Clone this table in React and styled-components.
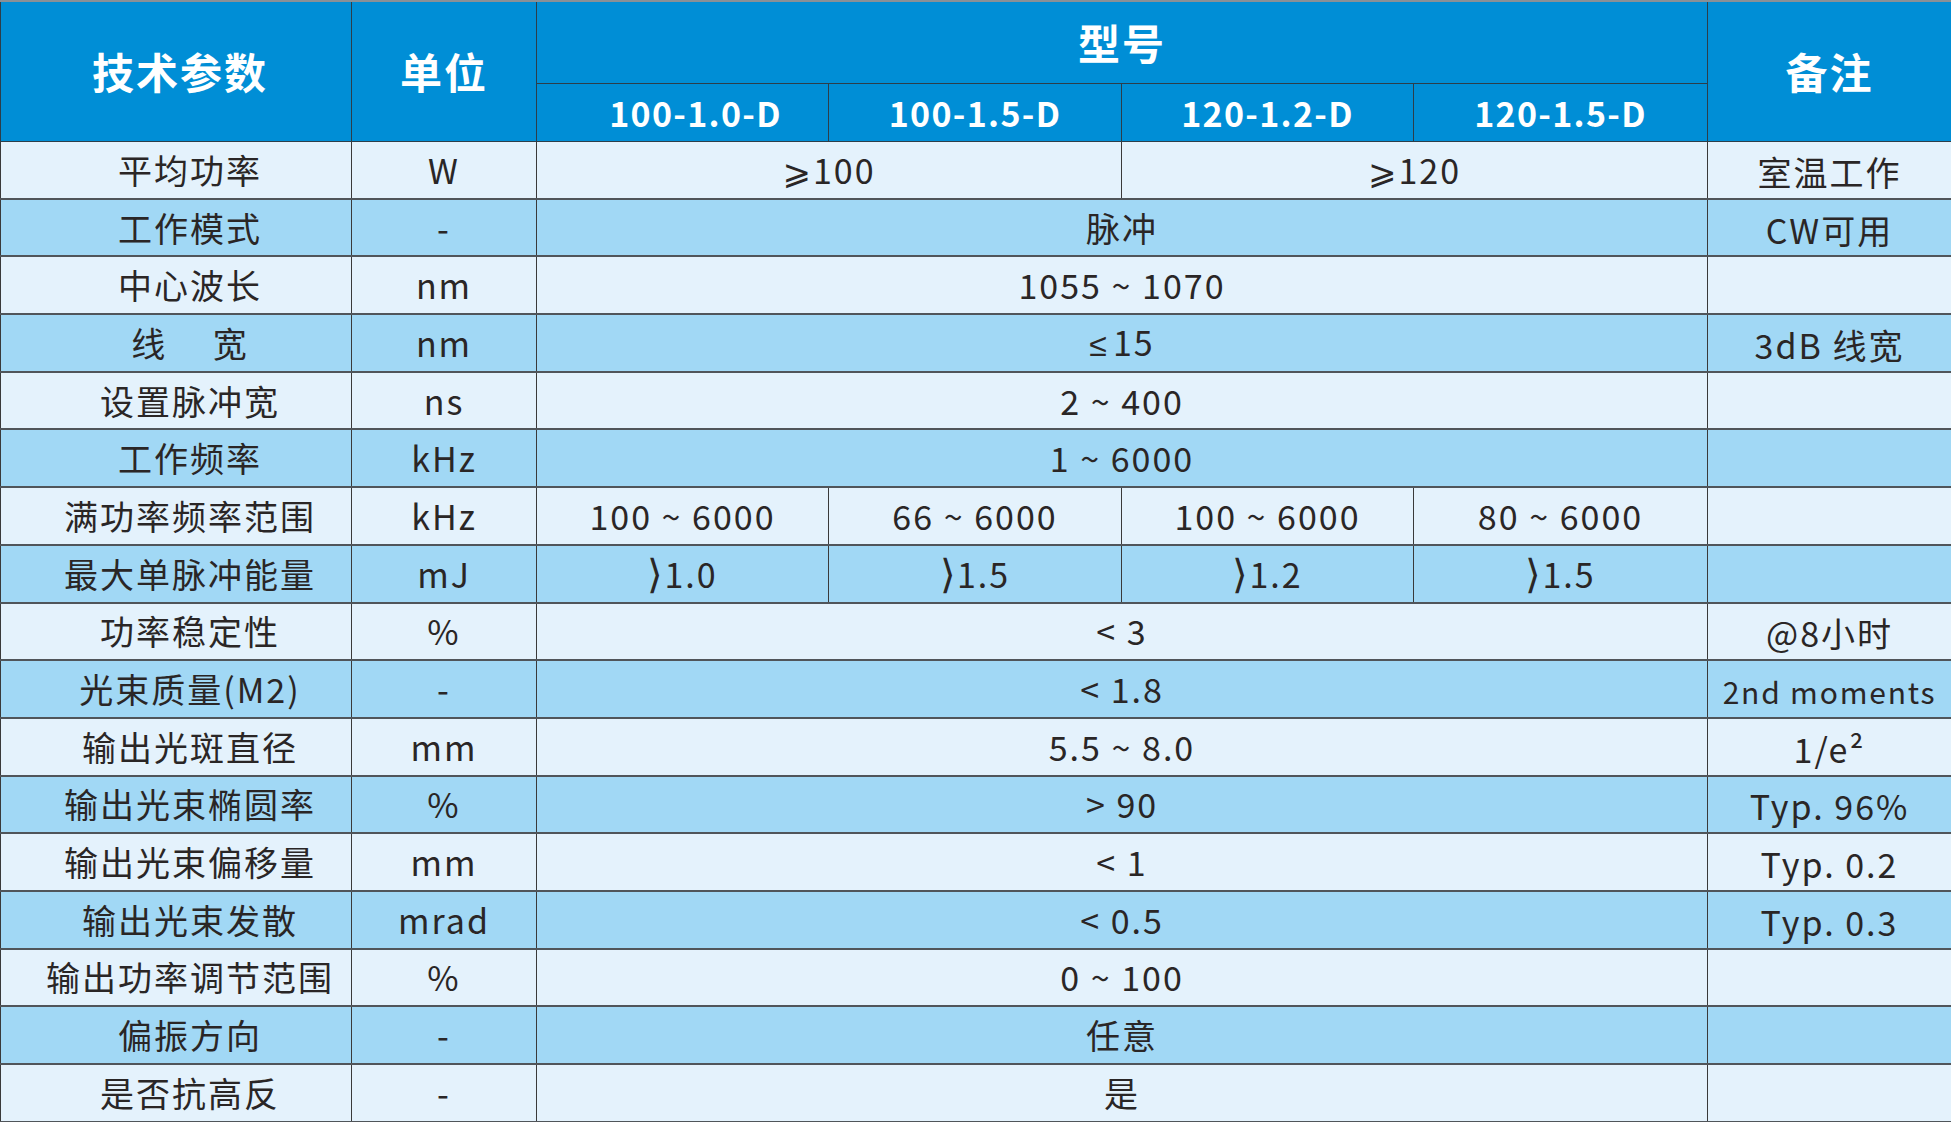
import React from 'react'
import styled, { createGlobalStyle } from 'styled-components'

const GlobalStyle = createGlobalStyle`
  html, body {
    margin: 0;
    padding: 0;
    background: #ffffff;
  }
  body {
    font-family: "Noto Sans CJK SC", "Noto Sans", "DejaVu Sans", sans-serif;
  }
`

const widths = [351, 185, 292, 293, 292, 294, 244]

const Chevron = styled.span`
  font-family: "DejaVu Sans ExtraLight", "DejaVu Sans", sans-serif;
  font-size: 40px;
  font-weight: 200;
  letter-spacing: 0;
  line-height: 0;
  margin-right: 1px;
`

const LatinSym = styled.span`
  font-family: "Liberation Sans", "DejaVu Sans", sans-serif;
  font-size: 32px;
  margin-right: 4px;
`

const gt = v => (
  <>
    <Chevron>⟩</Chevron>
    {v}
  </>
)

const rows = [
  ['平均功率', 'W', [['⩾100', 2], ['⩾120', 2]], '室温工作'],
  ['工作模式', '-', [['脉冲', 4]], 'CW可用'],
  ['中心波长', 'nm', [['1055 ~ 1070', 4]], ''],
  ['线　 宽', 'nm', [[<><LatinSym>≤</LatinSym>15</>, 4]], '3dB 线宽'],
  ['设置脉冲宽', 'ns', [['2 ~ 400', 4]], ''],
  ['工作频率', 'kHz', [['1 ~ 6000', 4]], ''],
  ['满功率频率范围', 'kHz', [['100 ~ 6000', 1], ['66 ~ 6000', 1], ['100 ~ 6000', 1], ['80 ~ 6000', 1]], ''],
  ['最大单脉冲能量', 'mJ', [[gt('1.0'), 1], [gt('1.5'), 1], [gt('1.2'), 1], [gt('1.5'), 1]], ''],
  ['功率稳定性', '%', [['< 3', 4]], '@8小时'],
  ['光束质量(M2)', '-', [['< 1.8', 4]], '2nd moments'],
  ['输出光斑直径', 'mm', [['5.5 ~ 8.0', 4]], '1/e²'],
  ['输出光束椭圆率', '%', [['> 90', 4]], 'Typ. 96%'],
  ['输出光束偏移量', 'mm', [['< 1', 4]], 'Typ. 0.2'],
  ['输出光束发散', 'mrad', [['< 0.5', 4]], 'Typ. 0.3'],
  ['输出功率调节范围', '%', [['0 ~ 100', 4]], ''],
  ['偏振方向', '-', [['任意', 4]], ''],
  ['是否抗高反', '-', [['是', 4]], ''],
]

const models = ['100-1.0-D', '100-1.5-D', '120-1.2-D', '120-1.5-D']

export default function App() {
  return (
    <>
      <GlobalStyle />
      <Sheet>
        <colgroup>
          {widths.map((w, i) => (
            <Col key={i} $w={w} />
          ))}
        </colgroup>
        <thead>
          <TopRow>
            <HeadCell rowSpan={2} $first>技术参数</HeadCell>
            <HeadCell rowSpan={2}>单位</HeadCell>
            <HeadCell colSpan={4}>型号</HeadCell>
            <HeadCell rowSpan={2}>备注</HeadCell>
          </TopRow>
          <SubRow>
            {models.map((m, i) => (
              <ModelCell key={m} $first={i === 0}>{m}</ModelCell>
            ))}
          </SubRow>
        </thead>
        <tbody>
          {rows.map(([name, unit, values, note], i) => (
            <DataRow key={name} $dark={i % 2 === 1}>
              <NameCell>{name}</NameCell>
              <Cell>{unit}</Cell>
              {values.map(([v, span], j) => (
                <Cell key={j} colSpan={span}>{v}</Cell>
              ))}
              <NoteCell $small={note.length > 10}>{note}</NoteCell>
            </DataRow>
          ))}
        </tbody>
      </Sheet>
    </>
  )
}

const Sheet = styled.table`
  width: 1951px;
  table-layout: fixed;
  border-collapse: collapse;
  border-top: 2px solid #8a9096;
  color: #2a2626;
`

const Col = styled.col`
  width: ${p => p.$w}px;
`

const TopRow = styled.tr`
  height: 82px;
  background: #008ed6;
`

const SubRow = styled.tr`
  height: 58px;
  background: #008ed6;
`

const HeadCell = styled.th`
  padding: 0 0 0 ${p => (p.$first ? '8px' : '0')};
  border: 1px solid #2c3e4a;
  color: #ffffff;
  font-size: 42px;
  font-weight: 700;
  letter-spacing: 2px;
  text-align: center;
  vertical-align: middle;
  line-height: 1;
`

const ModelCell = styled(HeadCell)`
  font-size: 34px;
  letter-spacing: 1.3px;
  padding: 2px 0 0 ${p => (p.$first ? '26px' : '0')};
`

const DataRow = styled.tr`
  height: 57.7px;
  background: ${p => (p.$dark ? '#a1d8f5' : '#e4f2fc')};
`

const Cell = styled.td`
  padding: 0;
  border-left: 1px solid #3a3a3a;
  border-right: 1px solid #3a3a3a;
  border-bottom: 2px solid #50555a;
  text-align: center;
  vertical-align: middle;
  font-size: 34px;
  letter-spacing: 2px;
  line-height: 1;
  white-space: nowrap;
`

const NameCell = styled(Cell)`
  padding-left: 28px;
`

const NoteCell = styled(Cell)`
  font-size: ${p => (p.$small ? '30px' : '34px')};
  letter-spacing: ${p => (p.$small ? '1.8px' : '2px')};
  padding-top: 4px;
`
